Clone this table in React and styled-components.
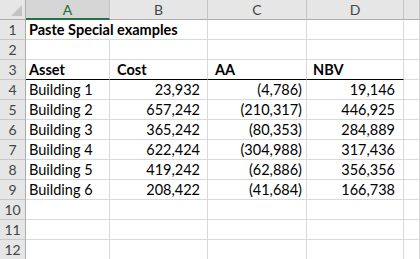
import React from "react";
import styled, { createGlobalStyle } from "styled-components";

const Global = createGlobalStyle`
  html, body { margin: 0; padding: 0; background: #fff; }
  body { font-family: "Lato", "Open Sans", sans-serif; overflow: hidden; }
`;

const Sheet = styled.div`
  display: grid;
  grid-template-columns: 26px 84px 98px 99px 97px 1fr;
  grid-auto-rows: 20px;
  width: 420px;
  height: 259px;
  overflow: hidden;
`;

const ColHead = styled.div`
  display: flex;
  align-items: center;
  justify-content: center;
  background: ${(p) => (p.$active ? "#d6d6d6" : "#e6e6e6")};
  color: ${(p) => (p.$active ? "#1e6b41" : "#444")};
  font-family: "Lato", sans-serif;
  font-size: 14px;
  border-right: 1px solid #c4c4c4;
  border-bottom: ${(p) => (p.$active ? "2px solid #217346" : "1px solid #acacac")};
  box-sizing: border-box;
`;

const Corner = styled.div`
  position: relative;
  background: #e6e6e6;
  border-right: 1px solid #acacac;
  border-bottom: 1px solid #acacac;
  box-sizing: border-box;
`;

const Tri = styled.div`
  position: absolute;
  right: 3px;
  bottom: 3px;
  width: 0;
  height: 0;
  border-left: 11px solid transparent;
  border-bottom: 11px solid #c3c3c3;
`;

const RowHead = styled.div`
  display: flex;
  align-items: center;
  justify-content: center;
  background: #e6e6e6;
  color: #444;
  font-family: "Lato", sans-serif;
  font-size: 14px;
  border-right: 1px solid #acacac;
  border-bottom: 1px solid #c8c8c8;
  box-sizing: border-box;
`;

const Cell = styled.div`
  display: flex;
  align-items: center;
  justify-content: ${(p) => (p.$num ? "flex-end" : "flex-start")};
  padding: 0 ${(p) => (p.$pr != null ? p.$pr : 3)}px 0 ${(p) => (p.$pl != null ? p.$pl : 3)}px;
  font-size: 14.5px;
  font-weight: ${(p) => (p.$bold ? 700 : 400)};
  color: #000;
  white-space: nowrap;
  overflow: visible;
  border-right: ${(p) => (p.$noRight ? "1px solid transparent" : "1px solid #d9d9d9")};
  border-bottom: ${(p) => (p.$thick ? "1px solid #000" : "1px solid #d9d9d9")};
  box-sizing: border-box;
  position: relative;
  z-index: ${(p) => (p.$noRight ? 1 : 0)};
`;

const cols = ["A", "B", "C", "D", ""];

const data = [
  ["Building 1", "23,932", "(4,786)", "19,146"],
  ["Building 2", "657,242", "(210,317)", "446,925"],
  ["Building 3", "365,242", "(80,353)", "284,889"],
  ["Building 4", "622,424", "(304,988)", "317,436"],
  ["Building 5", "419,242", "(62,886)", "356,356"],
  ["Building 6", "208,422", "(41,684)", "166,738"],
];

export default function App() {
  const rows = [];
  rows.push(
    <React.Fragment key="r1">
      <RowHead>1</RowHead>
      <Cell $bold $noRight>Paste Special examples</Cell>
      <Cell />
      <Cell />
      <Cell />
      <Cell />
    </React.Fragment>
  );
  rows.push(
    <React.Fragment key="r2">
      <RowHead>2</RowHead>
      <Cell />
      <Cell />
      <Cell />
      <Cell />
      <Cell />
    </React.Fragment>
  );
  rows.push(
    <React.Fragment key="r3">
      <RowHead>3</RowHead>
      <Cell $bold $thick>Asset</Cell>
      <Cell $bold $thick $pl={7}>Cost</Cell>
      <Cell $bold $thick $pl={7}>AA</Cell>
      <Cell $bold $thick $pl={6}>NBV</Cell>
      <Cell />
    </React.Fragment>
  );
  data.forEach((d, i) => {
    rows.push(
      <React.Fragment key={"d" + i}>
        <RowHead>{i + 4}</RowHead>
        <Cell>{d[0]}</Cell>
        <Cell $num $pr={7}>{d[1]}</Cell>
        <Cell $num $pr={4}>{d[2]}</Cell>
        <Cell $num $pr={8}>{d[3]}</Cell>
        <Cell />
      </React.Fragment>
    );
  });
  [10, 11, 12].forEach((n) => {
    rows.push(
      <React.Fragment key={"e" + n}>
        <RowHead>{n}</RowHead>
        <Cell />
        <Cell />
        <Cell />
        <Cell />
        <Cell />
      </React.Fragment>
    );
  });

  return (
    <>
      <Global />
      <Sheet>
        <Corner>
          <Tri />
        </Corner>
        {cols.map((c, i) => (
          <ColHead key={i} $active={c === "A"}>
            {c}
          </ColHead>
        ))}
        {rows}
      </Sheet>
    </>
  );
}
